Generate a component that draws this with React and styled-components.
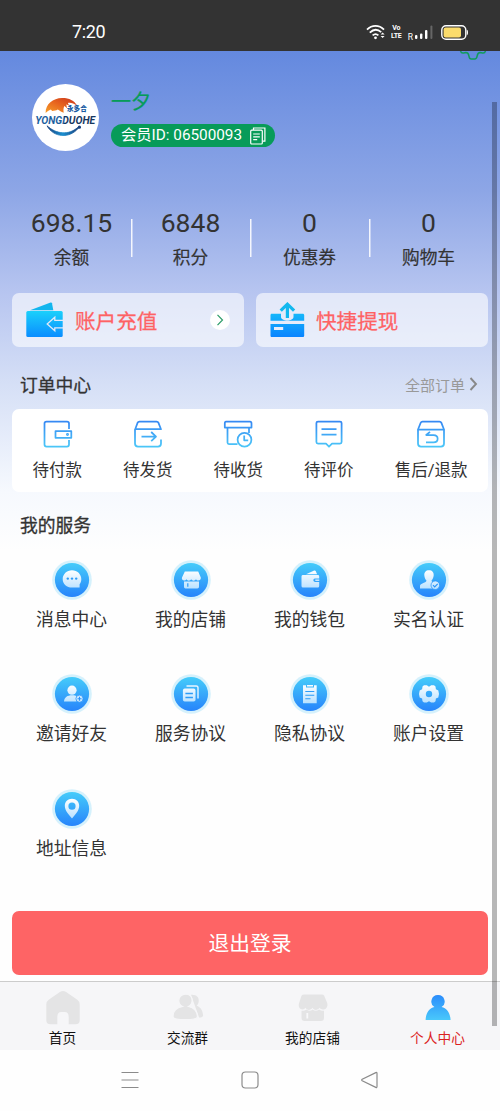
import React from "react";
import styled, { createGlobalStyle } from "styled-components";

const stats = [
  { value: "698.15", label: "余额" },
  { value: "6848", label: "积分" },
  { value: "0", label: "优惠券" },
  { value: "0", label: "购物车" },
];

const WifiIcon = () => (
  <svg width="20" height="16" viewBox="0 0 20 16" fill="none" stroke="#fff">
    <path d="M1 5.6C6 .6 13 .6 18 5.6" strokeWidth="1.8" />
    <path d="M3.8 8.6c3.6-3.4 8-3.4 11.4-.4" strokeWidth="1.8" />
    <path d="M6.6 11.4c1.9-1.6 4-1.6 5.8 0" strokeWidth="1.8" />
    <circle cx="9.5" cy="13.8" r="1.4" fill="#fff" stroke="none" />
    <path d="M14.6 10.4l2-2 2 2zM14.6 12l2 2 2-2z" fill="#fff" stroke="none" />
  </svg>
);

const SignalIcon = () => (
  <svg width="19" height="15" viewBox="0 0 19 15" fill="#fff">
    <rect x="1" y="10" width="2.4" height="4" rx="1" />
    <rect x="6" y="8.4" width="2.4" height="5.6" rx="1" />
    <rect x="11" y="5" width="2.4" height="9" rx="1" />
    <rect x="16.4" y="0.6" width="2" height="13.4" rx="1" fill="#666" />
  </svg>
);

const BatteryIcon = () => (
  <svg width="28" height="15" viewBox="0 0 28 15">
    <rect x="0.8" y="0.8" width="24" height="13.4" rx="4.2" fill="none" stroke="#fff" strokeWidth="1.4" />
    <rect x="2.6" y="2.6" width="17.4" height="9.8" rx="2" fill="#fbdc6c" />
    <path d="M25.8 4.8c1.6 0 1.6 5.4 0 5.4z" fill="#fff" />
  </svg>
);

const Logo = () => (
  <svg width="67" height="67" viewBox="0 0 67 67">
    <defs>
      <linearGradient id="flame" x1="0" y1="1" x2="1" y2="0">
        <stop offset="0" stopColor="#f6a02a" />
        <stop offset="0.5" stopColor="#e8651e" />
        <stop offset="1" stopColor="#c8321c" />
      </linearGradient>
      <linearGradient id="wave" x1="0" y1="0" x2="1" y2="0">
        <stop offset="0" stopColor="#17407e" />
        <stop offset="0.5" stopColor="#1b8fd0" />
        <stop offset="1" stopColor="#17407e" />
      </linearGradient>
      <linearGradient id="brand" x1="0" y1="0" x2="1" y2="0">
        <stop offset="0.47" stopColor="#1c5f9e" />
        <stop offset="0.47" stopColor="#16375f" />
      </linearGradient>
    </defs>
    <path
      d="M13.6 29C13.500 20 21 14.200 30 14c7-.1 12.300 2.400 15.200 7.800-3.700-2.900-7-3.500-9.400-2.900l1.400 2.500-3-.9 1 3.800-2.900-2.200c-.8 1.900-1.100 3.800-.6 6.600-2.500-.9-4.200-1.900-6-3.100-1.600 1.500-3.500 1-5.500 1.400l-1.400-1.600c-2 .9-3.700 2-5.200 3.600z"
      fill="url(#flame)"
    />
    <path d="M15 41.800c6.500 11.800 22.500 13.200 31.500 2.200l-.9-.4c-9 7.600-21.200 6.800-30.600-1.800z" fill="url(#wave)" stroke="url(#wave)" strokeWidth="0.8" />
    <circle cx="47.400" cy="43.200" r="1.600" fill="#17407e" />
    <text x="35" y="27" fontSize="6.600" fontWeight="900" fill="#1a5ba3" fontFamily="'Noto Sans CJK SC', sans-serif">
      永多合
    </text>
    <text
      x="3.200"
      y="40.400"
      fontSize="10.800"
      fontWeight="700"
      fontStyle="italic"
      fontFamily="Roboto, sans-serif"
      textLength="60"
      lengthAdjust="spacingAndGlyphs"
      fill="url(#brand)"
    >
      YONGDUOHE
    </text>
  </svg>
);

const CopyIcon = () => (
  <svg width="16" height="18" viewBox="0 0 16 18" fill="none" stroke="#fff" strokeWidth="1.200">
    <path d="M3.500 3V1h11.400v13.200h-2" />
    <rect x="0.700" y="3.200" width="11.600" height="13.800" rx="1" />
    <path d="M3.200 7h6.600M3.200 9.800h6.600M3.200 12.600h4" />
  </svg>
);

const GearEdge = () => (
  <svg width="28" height="10" viewBox="0 0 28 10" fill="none" stroke="#109c5c" strokeWidth="1.500">
    <path d="M1.500 0c.6 1.900 1.500 2.400 3.200 2l2.200-.5c1.900.1 2.700 1.300 3 3.300.3 2 1.200 3.200 2.400 3.200h3.500c1.200 0 2-1.100 2.400-3.200.3-2 1.200-3.200 3-3.300l2.200.5c1.700.4 2.500-.1 3.100-2" />
  </svg>
);

const RechargeIcon = () => (
  <svg width="37" height="36" viewBox="0 0 37 36">
    <defs>
      <linearGradient id="recharge" x1="0" y1="0" x2="0" y2="1">
        <stop offset="0" stopColor="#1bd0fb" />
        <stop offset="1" stopColor="#0a8dff" />
      </linearGradient>
    </defs>
    <path d="M4 8.300L24.600.5c.8-.2 1.200 0 1.400.8l1.300 7z" fill="#12b5ee" />
    <rect x="0.300" y="9" width="36.400" height="26" rx="1.500" fill="url(#recharge)" />
    <path d="M37 18.300h-8.200v-3.100L21.200 22l7.600 6.800v-3H37" fill="none" stroke="#e2e9f8" strokeWidth="1.300" />
  </svg>
);

const WithdrawIcon = () => (
  <svg width="35" height="36" viewBox="0 0 35 36">
    <defs>
      <linearGradient id="withdraw" gradientUnits="userSpaceOnUse" x1="0" y1="0" x2="0" y2="35">
        <stop offset="0" stopColor="#1ad0f8" />
        <stop offset="1" stopColor="#0a84ff" />
      </linearGradient>
    </defs>
    <path d="M1.800 11.800H11v2.900c0 5 12.500 5 12.500 0v-2.900h9.200c1 0 1.500.6 1.500 1.500v5.400H.5v-5.400c0-.9.400-1.500 1.300-1.500z" fill="url(#withdraw)" />
    <path d="M.5 22h33.700v11.500c0 1-.6 1.500-1.500 1.500H2c-1 0-1.500-.5-1.500-1.500zM4 25v3h9.200v-3z" fillRule="evenodd" fill="url(#withdraw)" />
    <path d="M17.400 16V3M10.700 8.600l6.700-6.400 6.700 6.400" fill="none" stroke="#12b8ef" strokeWidth="3.200" />
  </svg>
);

const orders = [
  {
    label: "待付款",
    icon: (
      <>
        <path d="M26 9V3.500Q26 1.500 24 1.500H3.500Q1.500 1.500 1.500 3.500v21q0 2 2 2H24q2 0 2-2V20" />
        <path d="M12.500 11.200h15.800v6.600H12.500z" />
        <circle cx="24.500" cy="14.500" r="0.600" />
      </>
    ),
  },
  {
    label: "待发货",
    icon: (
      <>
        <path d="M1.200 9.200L3.600 2.700q.5-1.200 1.800-1.200h17.200q1.300 0 1.800 1.200l2.600 6.500z" />
        <path d="M1 9.200v14.300q0 3 3 3h20q3 0 3-3V19.500" />
        <path d="M7.500 16.600H22M17.200 12l4.800 4.600-4.800 4.600" />
      </>
    ),
  },
  {
    label: "待收货",
    icon: (
      <>
        <path d="M2 1.500h24q1.500 0 1.500 2v4H.8v-4q0-2 1.200-2z" />
        <path d="M3.500 8v14.500q0 1.500 1.500 1.500h8.500M25 8v5" />
        <circle cx="20.500" cy="19.800" r="6.900" />
        <path d="M20.200 15.500v4.800h4" />
      </>
    ),
  },
  {
    label: "待评价",
    icon: (
      <>
        <path d="M3 1.500h22q1.600 0 1.600 1.600v19q0 1.600-1.600 1.600h-8L14 26.700l-3-3H3q-1.600 0-1.600-1.600v-19Q1.400 1.500 3 1.500z" />
        <path d="M6.500 9.200h15M6.500 14.700h15" />
      </>
    ),
  },
  {
    label: "售后/退款",
    icon: (
      <>
        <path d="M1 9.500l2.700-6.800q.5-1.200 1.800-1.200h17q1.300 0 1.800 1.200L27 9.500z" />
        <path d="M1 9.500v14q0 3 3 3h20q3 0 3-3v-14" />
        <path d="M13 11.800L9.200 15h7.300c5.500 0 5.500 7.300 0 7.300H9" />
      </>
    ),
  },
];

const services = [
  {
    label: "消息中心",
    icon: (
      <>
        <path d="M20 10.300c5.200 0 9.300 3.900 9.300 8.900 0 2-.6 3.600-1.700 5v3.300H20c-5.200 0-9.300-3.400-9.300-8.300s4.100-8.900 9.300-8.900z" />
        <g fill="#2d9cf8">
          <circle cx="15.800" cy="18.600" r="1.200" />
          <circle cx="20" cy="18.600" r="1.200" />
          <circle cx="24.200" cy="18.600" r="1.200" />
        </g>
      </>
    ),
  },
  {
    label: "我的店铺",
    icon: (
      <>
        <path d="M13.800 11.600h13.400l2.600 6c.6 3.200-3.800 4-4.800 1.700-.9 1.900-3.900 1.900-4.800 0-.9 1.900-3.900 1.900-4.800 0-1 2.300-5.300 1.500-4.400-1.700z" />
        <path d="M13 21.600h15v5.200q0 1.600-1.600 1.600h-12q-1.400 0-1.400-1.600z" />
        <path d="M16.800 23.200v3.600" stroke="#2d9cf8" strokeWidth="1.200" />
      </>
    ),
  },
  {
    label: "我的钱包",
    icon: (
      <>
        <path d="M16 14.200l8.200-3.700q1-.3 1.500.6l1.400 3.100z" />
        <path d="M13 15h14.800q1.400 0 1.400 1.400v2.200h-4.300q-1.600.3-1.600 1.700t1.600 1.600h4.300v4q0 1.500-1.400 1.500H13q-1.500 0-1.500-1.500v-9.500Q11.500 15 13 15z" />
        <path d="M25.300 19.500h4v1.400h-4z" />
      </>
    ),
  },
  {
    label: "实名认证",
    icon: (
      <>
        <path d="M20 10.200c3.200 0 4.900 2.100 4.700 5-.2 2.700-1.300 4.300-2.200 5.400.1 1.700 1.500 2.200 3 2.800l1.500 5H11v-2.400c0-1.400 1.100-2 2.400-2.500 2.100-.8 4-1.200 4.100-2.900-1-1.100-2-2.700-2.200-5.400-.2-2.900 1.500-5 4.700-5z" />
        <circle cx="26.300" cy="25.200" r="4.300" strokeWidth="0.800" stroke="#2b94fa" />
        <path d="M24 25.200l1.700 1.700 3-3.100" fill="none" stroke="#2b94fa" strokeWidth="1.200" />
      </>
    ),
  },
  {
    label: "邀请好友",
    icon: (
      <>
        <circle cx="20" cy="16.200" r="4.600" />
        <path d="M12 27.600c.2-4.300 3.600-6.300 8-6.300 2.700 0 5 .6 6.300 2.200l-2 4.100z" />
        <circle cx="27.500" cy="24.700" r="3.600" strokeWidth="0.800" stroke="#2b94fa" />
        <path d="M27.500 22.700v4M25.500 24.700h4" stroke="#2b94fa" strokeWidth="1.100" />
      </>
    ),
  },
  {
    label: "服务协议",
    icon: (
      <>
        <path d="M15.500 12h9.700q1.800 0 1.800 1.800v10.800" fill="none" stroke="#e9f6ff" strokeWidth="1.400" />
        <rect x="11.900" y="14.600" width="12.600" height="13" rx="1.800" />
        <path d="M14.400 19.400h7.500M14.400 23.500h7.500" stroke="#2d9cf8" strokeWidth="1.500" />
      </>
    ),
  },
  {
    label: "隐私协议",
    icon: (
      <>
        <path d="M13 11.200h3v2.200h8v-2.200h2.700v18H13z" />
        <path d="M17 11h6v1.500h-6z" />
        <path d="M15.300 17.500h9M15.300 21.200h9M15.300 24.800h5.200" stroke="#2d9cf8" strokeWidth="1.100" />
      </>
    ),
  },
  {
    label: "账户设置",
    icon: (
      <path
        fillRule="evenodd"
        d="M15 11.300h2.800l2.200 1.400 2.200-1.400H25l1.500 1.300.4 2.700 2.400 1.200.7 3.500-.7 3.400-2.400 1.200-.4 2.700-1.500 1.300h-2.800L20 27.200l-2.200 1.400H15l-1.500-1.300-.4-2.700-2.400-1.200L10 20l.7-3.500 2.400-1.200.4-2.700zM20 16.800a3.200 3.200 0 1 0 0 6.400 3.200 3.200 0 0 0 0-6.400z"
      />
    ),
  },
  {
    label: "地址信息",
    icon: (
      <path
        fillRule="evenodd"
        d="M20 9.800c4.300 0 7.200 3 7.200 7 0 4.700-4 9.200-7.200 12.600-3.200-3.400-7.200-7.900-7.200-12.600 0-4 2.900-7 7.200-7zM20 13.600a3.600 3.600 0 1 0 0 7.200 3.600 3.600 0 0 0 0-7.200z"
      />
    ),
  },
];

const tabs = [
  {
    label: "首页",
    icon: (
      <path d="M17.300 3.800q2.700-1.600 5.400 0L34 11.500q2.700 1.900 2.700 5v15.800q0 4-4 4h-7V29q0-5-4-5h-3.400q-4 0-4 5v7.300h-7q-4 0-4-4V16.500q0-3.100 2.700-5z" />
    ),
  },
  {
    label: "交流群",
    icon: (
      <>
        <path d="M23 6.800c5.600-.4 8.200 2.500 7.700 6.600-.2 2-1 3.300-2.100 4.300 4.100 1.400 6.100 4.700 6.500 9.800-.2 1.500-1.700 2-4 2z" />
        <path d="M17.500 6.200c4 0 6.600 2.600 6.600 6.300 0 3-1.600 4.900-3.600 6 5 1 8.500 4.400 9 10 0 2-3.600 3.200-12.200 3.200S5 30.500 5 28.500c0-5.300 4-9 9.500-10-2.300-1-3.700-3.200-3.700-6 0-3.700 2.700-6.300 6.700-6.300z" stroke="#f6f6f8" strokeWidth="1.200" />
      </>
    ),
  },
  {
    label: "我的店铺",
    icon: (
      <>
        <path d="M11 6.500h18q1.500 0 2.200 1.200l3.100 7.500c1.300 6.200-5.300 8-7.800 4.600-2 2.800-5.500 2.800-7 0-2 2.800-5.500 2.800-7 0-2.500 3.400-8 1.200-6.500-4.600l2.500-7.500q.8-1.200 2.500-1.200z" />
        <path d="M8.500 22.700c2 .3 3.700-.2 5-1.200 2 1.600 4.500 1.600 6 0 2 1.600 4.500 1.600 6.500 0 1.500 1 3.500 1.500 5 1.200V30q0 3-3 3H11.500q-3 0-3-3z" />
        <path d="M14.300 25v5.500" stroke="#f8f8fa" strokeWidth="1.800" />
      </>
    ),
  },
  {
    label: "个人中心",
    active: true,
    icon: (
      <path d="M20 7a6.500 6.500 0 0 1 3.600 12c5 1.300 8.500 5.500 9 12.900h-25C8 24.500 11.500 20.300 16.400 19A6.500 6.500 0 0 1 20 7z" />
    ),
  },
];

function App() {
  return (
    <>
      <GlobalStyle />
      <Phone>
        <StatusBar>
          <Time>7:20</Time>
          <StatusIcons>
            <WifiIcon />
            <Volte>
              <span>Vo</span>
              <span>LTE</span>
            </Volte>
            <Roaming>R</Roaming>
            <SignalIcon />
            <BatteryIcon />
          </StatusIcons>
        </StatusBar>

        <Page>
          <SettingsEdge>
            <GearEdge />
          </SettingsEdge>
          <Profile>
            <Avatar>
              <Logo />
            </Avatar>
            <div>
              <Name>一夕</Name>
              <MemberId>
                会员ID: 06500093
                <CopyIcon />
              </MemberId>
            </div>
          </Profile>

          <Stats>
            {stats.map((item) => (
              <Stat key={item.label}>
                <StatValue>{item.value}</StatValue>
                <StatLabel>{item.label}</StatLabel>
              </Stat>
            ))}
          </Stats>

          <Wallet>
            <WalletCard>
              <RechargeIcon />
              <WalletText $gap={12}>账户充值</WalletText>
              <RoundArrow>
                <svg width="20" height="20" viewBox="0 0 20 20" fill="none" stroke="#2c9c68" strokeWidth="1.200">
                  <path d="M7.500 4.800l5 5.200-5 5.200" />
                </svg>
              </RoundArrow>
            </WalletCard>
            <WalletCard>
              <WithdrawIcon />
              <WalletText $gap={11}>快捷提现</WalletText>
            </WalletCard>
          </Wallet>

          <SectionHead $height={62}>
            <SectionTitle>订单中心</SectionTitle>
            <More>
              全部订单
              <svg width="9" height="14" viewBox="0 0 9 14" fill="none" stroke="#888" strokeWidth="1.900">
                <path d="M1.500 1l5.500 6-5.500 6" />
              </svg>
            </More>
          </SectionHead>

          <Orders>
            {orders.map((item, i) => (
              <Order key={item.label}>
                <svg width="28" height="28" viewBox="0 0 28 28" fill="none" stroke={`url(#order${i})`} strokeWidth="1.750" strokeLinejoin="round" overflow="visible">
                  <defs>
                    <linearGradient id={`order${i}`} gradientUnits="userSpaceOnUse" x1="0" y1="0" x2="0" y2="28">
                      <stop offset="0" stopColor="#3585f3" />
                      <stop offset="1" stopColor="#4cc9f8" />
                    </linearGradient>
                  </defs>
                  {item.icon}
                </svg>
                <span>{item.label}</span>
              </Order>
            ))}
          </Orders>

          <SectionHead $height={52}>
            <SectionTitle>我的服务</SectionTitle>
          </SectionHead>

          <Services>
            {services.map((item, i) => (
              <Service key={item.label}>
                <svg width="40" height="40" viewBox="0 0 40 40">
                  <defs>
                    <linearGradient id={`disc${i}`} x1="0" y1="0" x2="0" y2="1">
                      <stop offset="0" stopColor="#45ccfa" />
                      <stop offset="1" stopColor="#2784fb" />
                    </linearGradient>
                    <linearGradient id={`glyph${i}`} gradientUnits="userSpaceOnUse" x1="0" y1="10" x2="0" y2="30">
                      <stop offset="0" stopColor="#fff" />
                      <stop offset="1" stopColor="#b6e0ff" />
                    </linearGradient>
                  </defs>
                  <circle cx="20" cy="20" r="19.800" fill="#d5f1fc" />
                  <circle cx="20" cy="20" r="17.100" fill={`url(#disc${i})`} />
                  <g fill={`url(#glyph${i})`}>{item.icon}</g>
                </svg>
                <span>{item.label}</span>
              </Service>
            ))}
          </Services>

          <Logout>退出登录</Logout>
        </Page>

        <TabBar>
          {tabs.map((tab) => (
            <Tab key={tab.label} $active={tab.active}>
              <svg width="40" height="40" viewBox="0 0 40 40" fill={tab.active ? "url(#person)" : "#e4e4e5"}>
                {tab.active && (
                  <defs>
                    <linearGradient id="person" x1="0" y1="0" x2="0" y2="1">
                      <stop offset="0" stopColor="#2b8cfb" />
                      <stop offset="1" stopColor="#49c8fb" />
                    </linearGradient>
                  </defs>
                )}
                {tab.icon}
              </svg>
              <span>{tab.label}</span>
            </Tab>
          ))}
        </TabBar>

        <SystemNav>
          <svg width="20" height="20" viewBox="0 0 20 20">
            <path d="M1.500 2.500h17M1.500 10h17M1.500 17.500h17" />
          </svg>
          <svg width="20" height="20" viewBox="0 0 20 20">
            <rect x="2" y="2" width="16" height="16" rx="3.500" />
          </svg>
          <svg width="20" height="20" viewBox="0 0 20 20">
            <path d="M15.800 2.600q1.200-.5 1.200.8v13.200q0 1.300-1.200.8L2.200 10.700q-1-.7 0-1.400z" />
          </svg>
        </SystemNav>
        <Scrollbar />
      </Phone>
    </>
  );
}

const GlobalStyle = createGlobalStyle`
  * {
    box-sizing: border-box;
  }
  body {
    margin: 0;
    font-family: Roboto, "Noto Sans CJK SC", sans-serif;
    color: #333;
  }
  svg {
    display: block;
    flex-shrink: 0;
  }
`;

const Phone = styled.div`
  position: relative;
  display: flex;
  flex-direction: column;
  width: 500px;
  height: 1111px;
  overflow: hidden;
  background: #fefefe;
`;

const StatusBar = styled.header`
  display: flex;
  justify-content: space-between;
  height: 51px;
  padding: 13px 31px 0 72px;
  background: #333;
  color: #fff;
`;

const Time = styled.div`
  font-size: 18px;
  line-height: 38px;
  height: 38px;
  letter-spacing: -0.4px;
`;

const StatusIcons = styled.div`
  display: flex;
  align-items: center;
  height: 38px;
`;

const Volte = styled.div`
  display: flex;
  flex-direction: column;
  align-items: center;
  width: 11px;
  margin: 0 6px 0 5px;
  font-size: 7px;
  font-weight: 700;
  line-height: 7px;
  letter-spacing: -0.3px;
  transform: scaleY(1.1);
`;

const Roaming = styled.div`
  margin: 9px 1px 0 0;
  font-size: 8.500px;
  line-height: 8px;

  & + svg {
    margin-right: 8px;
  }
`;

const Page = styled.main`
  position: relative;
  height: 930px;
  padding: 33px 12px 0;
  background: linear-gradient(
    180deg,
    #6489df 0,
    #8da6e6 140px,
    #b7c5f0 242px,
    #d5dff6 332px,
    #f6f9fe 440px,
    #fefefe 500px
  );
`;

const SettingsEdge = styled.div`
  position: absolute;
  top: 0;
  right: 13px;
`;

const Profile = styled.section`
  display: flex;
  gap: 12px;
  height: 67px;
  padding-left: 20px;
`;

const Avatar = styled.div`
  width: 67px;
  height: 67px;
  border-radius: 50%;
  background: #fff;
`;

const Name = styled.div`
  height: 40px;
  color: #079b59;
  font-size: 20px;
  line-height: 37px;
  -webkit-text-stroke: 0.2px;
`;

const MemberId = styled.div`
  display: flex;
  align-items: center;
  justify-content: space-between;
  width: 164px;
  height: 23px;
  padding: 0 9px 0 10px;
  border-radius: 12px;
  background: #079b59;
  color: #fff;
  font-size: 15.300px;
  line-height: 23px;
  white-space: nowrap;
`;

const Stats = styled.section`
  display: grid;
  grid-template-columns: repeat(4, 1fr);
  margin-top: 54px;
`;

const Stat = styled.div`
  display: flex;
  flex-direction: column;
  align-items: center;
  height: 88px;

  & + & {
    background: linear-gradient(#f4f6fd, #f4f6fd) no-repeat 0 14px / 1.5px 38px;
  }
`;

const StatValue = styled.div`
  font-size: 26.500px;
  line-height: 36px;
`;

const StatLabel = styled.div`
  font-size: 17.700px;
  line-height: 34px;
  -webkit-text-stroke: 0.2px;
`;

const Wallet = styled.section`
  display: grid;
  grid-template-columns: 232px 232px;
  gap: 12px;
`;

const WalletCard = styled.div`
  display: flex;
  align-items: center;
  height: 54px;
  padding: 0 14px;
  border-radius: 7px;
  background: rgba(255, 255, 255, 0.6);
`;

const WalletText = styled.div`
  margin-left: ${(props) => props.$gap}px;
  color: #fe6264;
  font-size: 20.600px;
  -webkit-text-stroke: 0.25px;
`;

const RoundArrow = styled.div`
  margin-left: auto;
  border-radius: 50%;
  background: #fff;
`;

const SectionHead = styled.div`
  display: flex;
  align-items: center;
  justify-content: space-between;
  height: ${(props) => props.$height}px;
  padding: 12px 10px 0 8px;
`;

const SectionTitle = styled.h2`
  margin: 0;
  font-size: 17.800px;
  font-weight: 400;
  -webkit-text-stroke: 0.3px;
`;

const More = styled.div`
  display: flex;
  align-items: center;
  gap: 4px;
  color: #999;
  font-size: 15px;
`;

const Orders = styled.section`
  display: flex;
  justify-content: space-around;
  height: 83px;
  padding-top: 11px;
  border-radius: 7px;
  background: #fff;
`;

const Order = styled.div`
  display: flex;
  flex-direction: column;
  align-items: center;
  font-size: 16.500px;
  line-height: 46px;
`;

const Services = styled.section`
  display: grid;
  grid-template-columns: repeat(4, 1fr);
  grid-auto-rows: 114.700px;
  margin-top: 15.500px;
`;

const Service = styled.div`
  display: flex;
  flex-direction: column;
  align-items: center;
  font-size: 17.800px;
  line-height: 39px;
`;

const Logout = styled.button`
  display: block;
  width: 476px;
  height: 64px;
  margin-top: 7.500px;
  padding: 0 0 2px;
  border: 0;
  border-radius: 7px;
  background: #fe6465;
  color: #fff;
  font-family: inherit;
  font-size: 20.800px;
`;

const TabBar = styled.nav`
  display: grid;
  grid-template-columns: repeat(4, 1fr);
  height: 69px;
  padding-top: 6px;
  border-top: 1px solid #ccc;
  background: #f6f6f8;
`;

const Tab = styled.div`
  display: flex;
  flex-direction: column;
  align-items: center;
  color: ${(props) => (props.$active ? "#dc1f1f" : "#111")};
  font-size: 13.700px;
  line-height: 20px;
`;

const SystemNav = styled.footer`
  display: flex;
  justify-content: space-between;
  padding: 20px 120px 0;

  svg {
    fill: none;
    stroke: #8b8b8b;
    stroke-width: 1.2;
  }
`;

const Scrollbar = styled.div`
  position: absolute;
  top: 102px;
  right: 3px;
  width: 5px;
  height: 924px;
  background: rgba(0, 0, 0, 0.28);
`;

export default App;
